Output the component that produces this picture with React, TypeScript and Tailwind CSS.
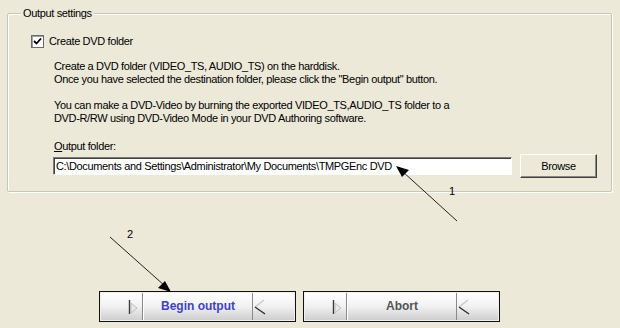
import React from "react";

function XPButton({ label, color, width }: { label: string; color: string; width: string }) {
  return (
    <div className={`${width} h-[31px] border border-[#111] bg-[#f0f0ec] p-px`}>
      <div className="flex h-full w-full bg-gradient-to-b from-[#ffffff] via-[#f1f1f1] to-[#cfcfcf]">
        <div className="relative flex w-[42px] items-center justify-end pr-[2px] border-r border-r-[#8a8a8a]">
          <svg width="12" height="16" viewBox="0 0 12 16">
            <line x1="1.5" y1="1" x2="1.5" y2="15" stroke="#3a3a3a" strokeWidth="1.4" />
            <polygon points="3,4 9,9 3,14" fill="#e9e9e9" stroke="#bdbdbd" strokeWidth="1" />
          </svg>
        </div>
        <div className="flex flex-1 items-center justify-center border-l border-l-white">
          <span className={`text-[12px] font-bold ${color}`} style={{ fontFamily: '"Liberation Sans", Arial, sans-serif' }}>{label}</span>
        </div>
        <div className="flex w-[42px] items-center justify-start pl-[1px] border-l border-l-[#8a8a8a]">
          <svg width="14" height="18" viewBox="0 0 14 18">
            <line x1="1" y1="9" x2="10" y2="2" stroke="#c8c8c8" strokeWidth="1.2" />
            <line x1="1" y1="9" x2="11" y2="16" stroke="#2a2a2a" strokeWidth="1.3" />
          </svg>
        </div>
      </div>
    </div>
  );
}

export default function App() {
  return (
    <div
      className="relative h-[328px] w-[620px] overflow-hidden bg-[#ECE9D8] text-[11px] leading-[13px] text-black"
      style={{ fontFamily: '"Liberation Sans", Arial, sans-serif' }}
    >
      <div className="pl-[7px] pt-[13px]">
        <div className="relative h-[179px] w-[605px] rounded-[2px] border border-[#c9c6b6] shadow-[inset_1px_1px_0_#ffffff,1px_1px_0_#ffffff]">
          <div className="absolute left-[13px] top-[-7px] bg-[#ECE9D8] px-[2px] tracking-[-0.35px]">Output settings</div>
          <div className="pt-[21px] pl-[23px]">
            <div className="flex h-[13px] items-center">
              <div className="flex h-[13px] w-[13px] items-center justify-center border border-[#6b6b6b] bg-white shadow-[inset_1px_1px_0_#a0a0a0]">
                <svg width="9" height="9" viewBox="0 0 9 9">
                  <path d="M1 4 L3.5 6.5 L8 1.5" fill="none" stroke="#000" strokeWidth="1.8" />
                </svg>
              </div>
              <span className="ml-[5px] tracking-[-0.35px]">Create DVD folder</span>
            </div>
            <div className="mt-[12px] pl-[23px] tracking-[-0.35px]">
              <div>Create a DVD folder (VIDEO_TS, AUDIO_TS) on the harddisk.</div>
              <div>Once you have selected the destination folder, please click the "Begin output" button.</div>
              <div className="mt-[13px]">You can make a DVD-Video by burning the exported VIDEO_TS,AUDIO_TS folder to a</div>
              <div>DVD-R/RW using DVD-Video Mode in your DVD Authoring software.</div>
              <div className="mt-[15px]"><span className="underline">O</span>utput folder:</div>
              <div className="mt-[1px] ml-[-1px] flex h-[24px] items-center gap-[8px]">
                <div className="flex h-[18px] w-[459px] items-center border border-t-[#7a7a7a] border-l-[#7a7a7a] border-b-white border-r-white bg-white pl-[2px] shadow-[inset_1px_1px_0_#404040]">
                  C:\Documents and Settings\Administrator\My Documents\TMPGEnc DVD
                </div>
                <div className="flex h-[24px] w-[77px] items-center justify-center border border-t-white border-l-white border-b-[#404040] border-r-[#404040] bg-[#ECE9D8] shadow-[inset_-1px_-1px_0_#8a8a8a]">
                  Browse
                </div>
              </div>
            </div>
          </div>
        </div>
      </div>
      <div className="mt-[99px] flex gap-[7px] pl-[99px]">
        <XPButton label="Begin output" color="text-[#3c43c4]" width="w-[197px]" />
        <XPButton label="Abort" color="text-[#555555]" width="w-[197px]" />
      </div>
      <svg className="absolute left-0 top-0" width="620" height="328" viewBox="0 0 620 328">
        <line x1="457" y1="221" x2="402" y2="171" stroke="#222" strokeWidth="1" />
        <polygon points="396,166 409,170 402,177" fill="#000" />
        <line x1="110" y1="237" x2="165" y2="286" stroke="#222" strokeWidth="1" />
        <polygon points="171,292 158,288 165,281" fill="#000" />
      </svg>
      <div className="absolute left-[449px] top-[185px]">1</div>
      <div className="absolute left-[127px] top-[228px]">2</div>
    </div>
  );
}
